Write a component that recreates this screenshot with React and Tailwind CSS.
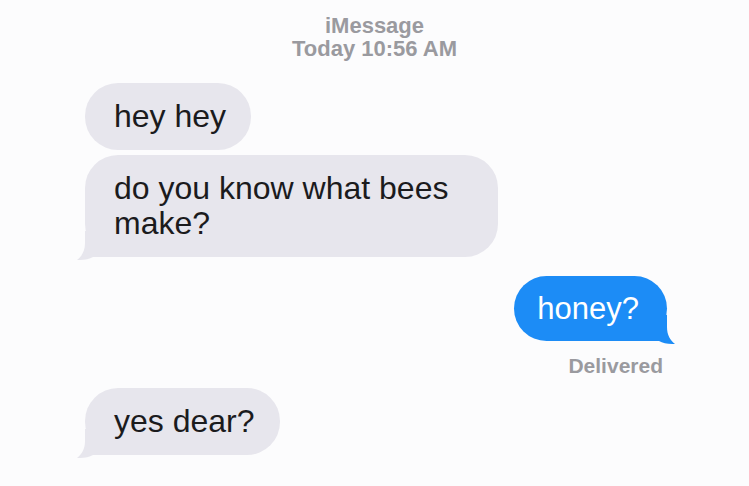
const GRAY = "#e7e6ed";
const BLUE = "#1c8cf6";

const LeftTail = ({ color }) => (
  <svg
    className="absolute -left-[8px] -bottom-[4px]"
    width="40"
    height="30"
    viewBox="0 0 40 30"
  >
    <path d="M8 0 L8 12 C8 20 5 25 0 29 C7 29.5 12 28 16 26 L40 26 L40 0 Z" fill={color} />
  </svg>
);

const RightTail = ({ color }) => (
  <svg
    className="absolute -right-[8px] -bottom-[4px]"
    width="40"
    height="30"
    viewBox="0 0 40 30"
  >
    <path d="M32 0 L32 12 C32 20 35 25 40 29 C33 29.5 28 28 24 26 L0 26 L0 0 Z" fill={color} />
  </svg>
);

const Received = ({ children, tail, className = "" }) => (
  <div
    className={`relative self-start rounded-[33px] bg-[#e7e6ed] py-[16px] pl-[29px] pr-[25px] text-[32px] leading-[35px] text-[#1b1b1d] ${className}`}
  >
    <span className="relative z-10">{children}</span>
    {tail && <LeftTail color={GRAY} />}
  </div>
);

export default function App() {
  return (
    <div
      className="min-h-screen w-full bg-[#fcfcfd] px-[85px] pb-6 pt-[14px]"
      style={{ fontFamily: '"Liberation Sans", Arial, sans-serif' }}
    >
      <div className="text-center text-[22px] font-bold leading-[23px] text-[#9a9a9f]">
        <div>iMessage</div>
        <div>Today 10:56 AM</div>
      </div>

      <div className="mt-[23px] flex flex-col">
        <Received>hey hey</Received>
        <Received tail className="mt-[5px] w-[413px]">
          do you know what bees make?
        </Received>

        <div className="mr-[-3px] mt-[19px] flex flex-col items-end">
          <div
            className="relative rounded-[33px] py-[15px] pl-[23px] pr-[28px] text-[31px] leading-[35px] text-white"
            style={{ backgroundColor: BLUE }}
          >
            <span className="relative z-10">honey?</span>
            <RightTail color={BLUE} />
          </div>
          <div className="mr-[4px] mt-[13px] text-[21px] font-bold leading-[24px] text-[#9a9a9f]">
            Delivered
          </div>
        </div>

        <Received tail className="mt-[10px]">
          yes dear?
        </Received>
      </div>
    </div>
  );
}
